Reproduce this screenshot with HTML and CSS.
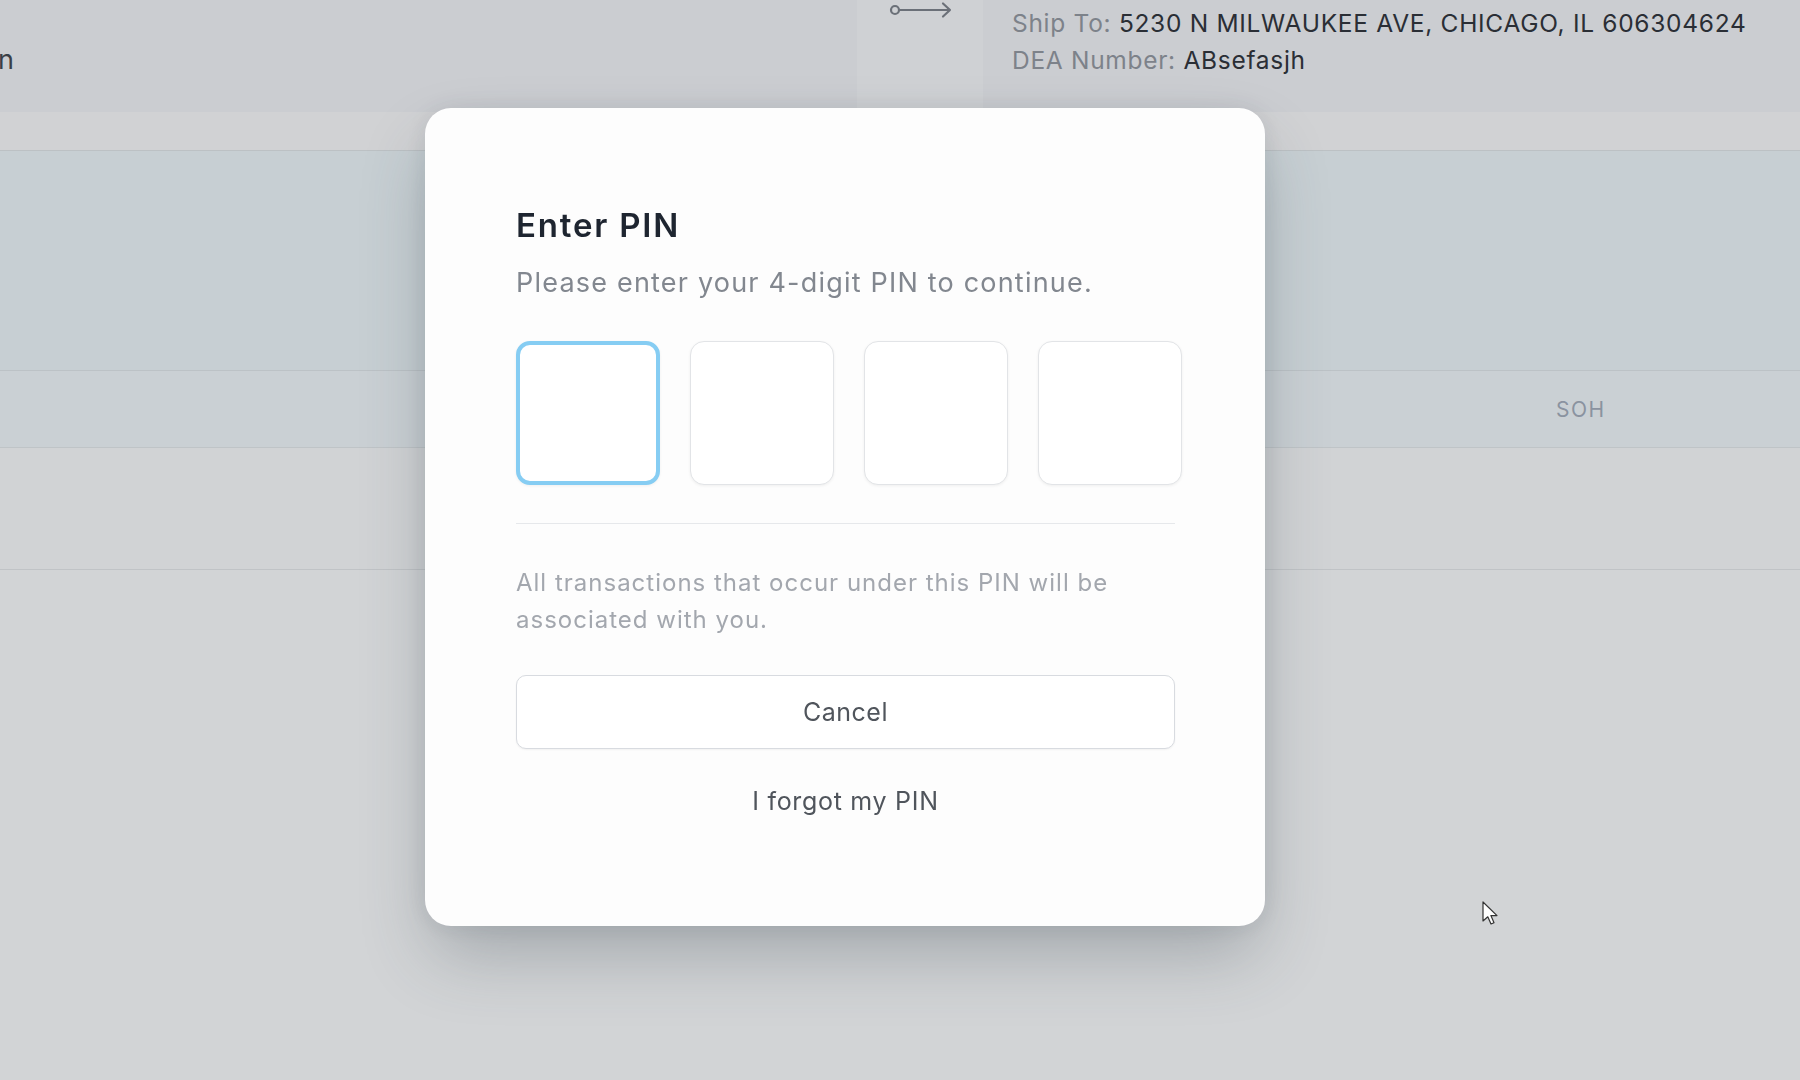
FILE: index.html
```html
<!DOCTYPE html>
<html lang="en">
<head>
  <meta charset="UTF-8" />
  <title>Order - Enter PIN</title>
  <link rel="stylesheet" href="styles.css">
</head>
<body>

  <div class="page">
    <header class="top">
      <div class="top-left">
        <div class="top-name">Admin</div>
      </div>
      <div class="top-mid">
        <svg class="route-icon" width="64" height="20" viewBox="0 0 64 20">
          <circle cx="6" cy="10" r="4" fill="none" stroke="#6b7078" stroke-width="2.2"/>
          <path d="M10 10 H61 M54 3.5 L61 10 L54 16.5" fill="none" stroke="#6b7078" stroke-width="2.2" stroke-linecap="round" stroke-linejoin="round"/>
        </svg>
      </div>
      <div class="top-right">
        <div class="info-line"><span class="lbl">Ship To:</span> 5230 N MILWAUKEE AVE, CHICAGO, IL 606304624</div>
        <div class="info-line"><span class="lbl">DEA Number:</span> ABsefasjh</div>
      </div>
    </header>

    <div class="band"></div>
    <div class="panel"></div>
    <div class="table-head">
      <span class="col-soh">SOH</span>
    </div>
    <div class="table-row"></div>
    <div class="rest"></div>
  </div>

  <div class="overlay">
    <div class="modal">
      <h2 class="modal-title">Enter PIN</h2>
      <p class="modal-sub">Please enter your 4-digit PIN to continue.</p>

      <div class="pin-row">
        <input class="pin-box active" type="password" maxlength="1" />
        <input class="pin-box" type="password" maxlength="1" />
        <input class="pin-box" type="password" maxlength="1" />
        <input class="pin-box" type="password" maxlength="1" />
      </div>

      <hr class="divider" />

      <p class="modal-note">All transactions that occur under this PIN will be associated with you.</p>

      <button class="btn-cancel" type="button">Cancel</button>
      <a class="forgot" href="#">I forgot my PIN</a>
    </div>
  </div>

  <svg class="cursor" width="20" height="28" viewBox="0 0 20 28">
    <path d="M1 1 L1 20 L5.8 15.8 L9 23 L12 21.7 L8.9 14.6 L15 14.6 Z" fill="#fff" stroke="#333" stroke-width="1.2" stroke-linejoin="round"/>
  </svg>

</body>
</html>
```

FILE: styles.css
```css
* {
  box-sizing: border-box;
}
body {
  margin: 0;
  font-family: Inter, "Noto Sans", Arial, sans-serif;
  background: #d2d4d6;
  color: #2a2e35;
  height: 1080px;
  overflow: hidden;
}

/* background page (dimmed) */
.top {
  display: flex;
  height: 112px;
  background: #cbcdd1;
}
.top-left {
  width: 857px;
  display: flex;
}
.top-name {
  width: 14px;
  display: flex;
  justify-content: flex-end;
  overflow: hidden;
  white-space: nowrap;
  font-size: 27px;
  color: #3a3f47;
  padding-top: 43px;
}
.top-mid {
  width: 126px;
  background: #cfd1d4;
}
.route-icon {
  display: block;
  margin: 0 0 0 32px;
}
.top-right {
  flex: 1;
  padding: 5px 0 0 29px;
}
.info-line {
  font-size: 24.5px;
  line-height: 37px;
  letter-spacing: 0.7px;
  color: #2a2e35;
  white-space: nowrap;
}
.info-line .lbl {
  color: #7d828a;
}

.band {
  height: 39px;
  background: #d1d2d4;
  border-bottom: 1px solid #bcc1c4;
}
.panel {
  height: 220px;
  background: #c7cfd3;
  border-bottom: 1px solid #bcc2c6;
}
.table-head {
  height: 77px;
  background: #cad0d4;
  border-bottom: 1px solid #bfc4c7;
  display: flex;
  align-items: center;
  padding-left: 1556px;
}
.col-soh {
  font-size: 21px;
  letter-spacing: 1.5px;
  color: #8a93a0;
}
.table-row {
  height: 122px;
  background: #d1d3d5;
  border-bottom: 1px solid #c0c3c6;
}
.rest {
  height: 500px;
  background: #d2d4d6;
}

/* modal */
.overlay {
  position: fixed;
  top: 0;
  left: 0;
  right: 0;
  bottom: 0;
  padding: 108px 0 0 425px;
}
.modal {
  width: 840px;
  height: 818px;
  background: #fdfdfd;
  border-radius: 26px;
  padding: 97px 90px 0 91px;
  box-shadow: 0 34px 70px -8px rgba(60, 70, 80, 0.32), 0 0 24px rgba(60, 70, 80, 0.1);
}
.modal-title {
  margin: 0;
  font-size: 33px;
  line-height: 40px;
  letter-spacing: 1.8px;
  font-weight: 600;
  color: #1e2530;
}
.modal-sub {
  margin: 20px 0 0;
  font-size: 27px;
  line-height: 36px;
  letter-spacing: 1.2px;
  color: #82878f;
}
.pin-row {
  display: flex;
  gap: 30px;
  margin-top: 40px;
}
.pin-box {
  flex: 0 0 144px;
  width: 144px;
  height: 144px;
  border: 1.5px solid #e2e4e7;
  border-radius: 14px;
  background: #fff;
  box-shadow: 0 1px 3px rgba(0,0,0,0.06);
  outline: none;
  font-size: 40px;
  text-align: center;
}
.pin-box.active {
  border: 4px solid #86cdf3;
}
.divider {
  margin: 38px 0 0;
  border: none;
  border-top: 1.5px solid #e6e8eb;
  width: 659px;
}
.modal-note {
  margin: 40px 0 0;
  font-size: 24px;
  line-height: 37px;
  letter-spacing: 1px;
  color: #a3a7ae;
  width: 640px;
}
.btn-cancel {
  display: block;
  width: 659px;
  height: 74px;
  margin-top: 37px;
  background: #fff;
  border: 1.5px solid #d8dbe0;
  border-radius: 10px;
  font-family: inherit;
  font-size: 25px;
  letter-spacing: 0.5px;
  color: #50555c;
  cursor: pointer;
  box-shadow: 0 1px 2px rgba(0,0,0,0.05);
}
.forgot {
  display: block;
  width: 659px;
  margin-top: 34px;
  text-align: center;
  font-size: 25px;
  line-height: 36px;
  letter-spacing: 0.7px;
  color: #50555c;
  text-decoration: none;
}

.cursor {
  position: absolute;
  left: 1482px;
  top: 901px;
}
```
